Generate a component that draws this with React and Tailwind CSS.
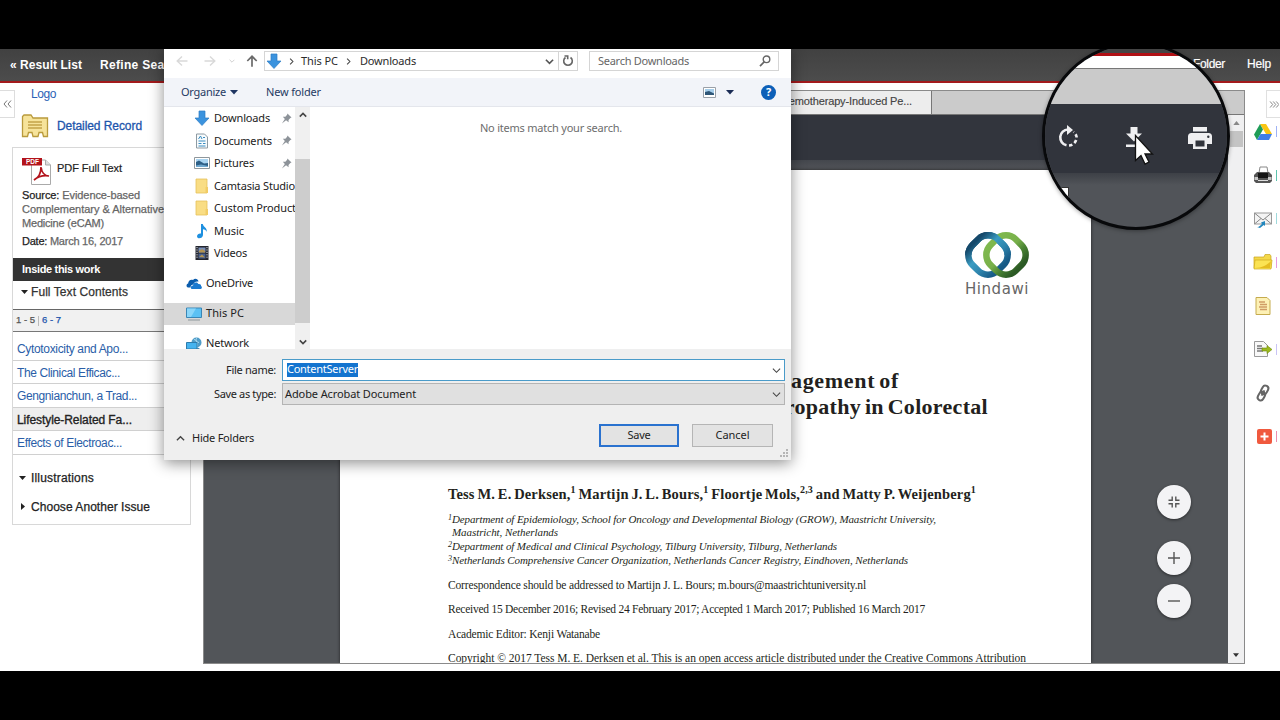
import { useLayoutEffect, useRef } from 'react';

// Single line of text, tracked so that it takes exactly w pixels
const Fit = ({ w, className = '', children }) => {
  const ref = useRef(null);

  useLayoutEffect(() => {
    const el = ref.current;
    el.style.letterSpacing = '0px';
    const natural = el.getBoundingClientRect().width;
    el.style.letterSpacing = `${(w - natural) / el.textContent.length}px`;
  }, [w]);

  return (
    <span ref={ref} className={`inline-block whitespace-nowrap ${className}`}>
      {children}
    </span>
  );
};

const Chevron = ({ d, className = '', size = 9, stroke = '#444', width = 1.5 }) => (
  <svg viewBox="0 0 10 10" width={size} height={size} className={`shrink-0 ${className}`}>
    <path d={d} fill="none" stroke={stroke} strokeWidth={width} />
  </svg>
);

const DOWN = 'M1 3l4 4 4-4';
const UP = 'M1 7l4-4 4 4';
const RIGHT = 'M3 1l4 4-4 4';

/* ---------- Icons of the file tree ---------- */

const DownloadIcon = () => (
  <svg viewBox="0 0 16 16" width="16" height="16" className="shrink-0">
    <path d="M5 1h6v7h4l-7 7.500L1 8h4z" fill="#3b93de" stroke="#2b7cc4" strokeWidth=".7" />
  </svg>
);

const DocumentIcon = () => (
  <svg viewBox="0 0 16 16" width="16" height="16" className="shrink-0">
    <path d="M2.500 1h8l3 3v11h-11z" fill="#f7fbfd" stroke="#8d9aa2" />
    <path d="M4.500 6l2-3 1.500 3M9 4.500h2M4.500 8h7M4.500 10.500h3M9 10.500h2.500M4.500 13h7" stroke="#3a8cc0" fill="none" />
  </svg>
);

const PictureIcon = () => (
  <svg viewBox="0 0 16 16" width="16" height="16" className="shrink-0">
    <path d="M.5 2.500h15v11H.5z" fill="#fff" stroke="#8f979c" />
    <path d="M2 4h12v8H2z" fill="#a9d4f1" />
    <path d="M2 7l3-1.500 5 3 4-.5v4H2z" fill="#2d5f86" />
    <path d="M2 10.500l5-1 7 1.500v1H2z" fill="#6fa8cf" />
  </svg>
);

const FolderIcon = () => (
  <svg viewBox="0 0 16 16" width="16" height="16" className="shrink-0">
    <path d="M2 1h11v14H2z" fill="#f9dd84" stroke="#e6c25c" strokeWidth=".8" />
    <path d="M11.500 9H14v6h-2.500z" fill="#f1cc66" />
  </svg>
);

const MusicIcon = () => (
  <svg viewBox="0 0 16 16" width="16" height="16" className="shrink-0">
    <path d="M7 1h1.800c.5 3 4.500 3.500 4 8-.6-2-2.200-2.600-3.800-2.800V12c0 2-1.900 3.300-3.900 3.300S2.300 13 4 11.300c.9-.8 2-.9 3-.7z" fill="#1e90e0" />
  </svg>
);

const VideoIcon = () => (
  <svg viewBox="0 0 16 16" width="16" height="16" className="shrink-0">
    <path d="M1.500 1h13v14h-13z" fill="#23252e" />
    <path d="M4.500 2.500h7v5h-7z" fill="#7b90b8" />
    <path d="M4.500 8.500h7v5h-7z" fill="#48618f" />
    <path d="M5 6l3-2 3 2v1.500H5zM5 12l3-2.500 3 3z" fill="#b29350" />
    <path d="M3 2v12M13 2v12" stroke="#dfe3ea" strokeDasharray="1.200 1.200" />
  </svg>
);

const OneDriveIcon = () => (
  <svg viewBox="0 0 16 12" width="16" height="12" className="shrink-0">
    <path d="M2 9.500C0 9 0 6 2.200 5.500 2 3 4.500 1 7 2c2-2.200 5-1 5.500 1.500-3-.5-5 1-5 3-1.700 0-3 1-3 3z" fill="#0a5cad" />
    <path d="M5.500 11c-1.300-1-.8-3.700 1.600-3.600C7 4.500 11 3.500 12.300 6c2-.4 3 .8 2.700 1.900 1.200.6 1.200 2.600-.3 3.100z" fill="#1a79cf" />
  </svg>
);

const PcIcon = () => (
  <svg viewBox="0 0 16 14" width="16" height="14" className="shrink-0">
    <path d="M.5 1h15v9.500H.5z" fill="#5cc1f3" stroke="#3a86b5" />
    <path d="M1 1.500h9l-5 8.500H1z" fill="#8bd6f9" />
    <path d="M2 13h12" stroke="#8e979c" />
  </svg>
);

const NetworkIcon = () => (
  <svg viewBox="0 0 16 14" width="16" height="14" className="shrink-0">
    <circle cx="10.500" cy="5.500" r="5" fill="#4f9cc8" />
    <path d="M8 2.500c3 0 2 3 5 3M11 .8c-3 3 2 5 0 9" stroke="#a7d8ef" fill="none" />
    <path d="M.5 5.500h10.500V12H.5z" fill="#45b3ef" stroke="#2d7cad" />
    <path d="M9 13l3-2 2 1.500" stroke="#2d7cad" fill="none" />
  </svg>
);

const PinIcon = () => (
  <svg viewBox="0 0 12 12" width="11" height="11" className="shrink-0">
    <path d="M7 .5L11.500 5l-1.300.5-2 2 .1 2.500L5.500 7.800 1 11.500l3.200-4.900L2 4l2.800.1L6.700 2z" fill="#8d9399" />
  </svg>
);

const quickAccess = [
  { label: 'Downloads', w: 56, Icon: DownloadIcon, pinned: true },
  { label: 'Documents', w: 58, Icon: DocumentIcon, pinned: true },
  { label: 'Pictures', w: 40, Icon: PictureIcon, pinned: true },
  { label: 'Camtasia Studio', w: 81, Icon: FolderIcon },
  { label: 'Custom Product', w: 82, Icon: FolderIcon },
  { label: 'Music', w: 30, Icon: MusicIcon },
  { label: 'Videos', w: 33, Icon: VideoIcon },
];

const roots = [
  { label: 'OneDrive', w: 47, Icon: OneDriveIcon },
  { label: 'This PC', w: 38, Icon: PcIcon, active: true },
  { label: 'Network', w: 43, Icon: NetworkIcon },
];

/* ---------- Save dialog ---------- */

const NavRow = () => (
  <div className="flex h-[29px] shrink-0 items-start pt-[2px] text-[#2b2b2b]">
    <div className="flex h-5 w-[100px] shrink-0 items-center pl-[12px]">
      <svg viewBox="0 0 12 12" width="12" height="12">
        <path d="M6 1.500L1.200 6 6 10.500M1.200 6H11.500" fill="none" stroke="#d9d9d9" strokeWidth="1.400" />
      </svg>
      <svg viewBox="0 0 12 12" width="12" height="12" className="ml-4">
        <path d="M6 1.500L10.800 6 6 10.500M10.800 6H.5" fill="none" stroke="#d9d9d9" strokeWidth="1.400" />
      </svg>
      <Chevron d={DOWN} size={6} stroke="#ccc" className="ml-[13px]" />
      <svg viewBox="0 0 12 12" width="12" height="12" className="ml-[11px]">
        <path d="M1.300 6L6 1.300 10.700 6M6 1.300V11.800" fill="none" stroke="#6a6a6a" strokeWidth="1.700" />
      </svg>
    </div>
    <div className="flex h-5 w-[314px] shrink-0 items-center border border-[#d5d5d5] bg-white">
      <div className="ml-[1px] flex"><DownloadIcon /></div>
      <Chevron d={RIGHT} size={7} className="mr-[6px] ml-[6px]" />
      <Fit w={37}>This PC</Fit>
      <Chevron d={RIGHT} size={7} className="mr-[8px] ml-[7px]" />
      <Fit w={56}>Downloads</Fit>
      <Chevron d={DOWN} size={9} className="mr-[4px] ml-auto" stroke="#555" width={1.8} />
      <div className="flex h-full w-[19px] items-center justify-center border-l border-[#d5d5d5]">
        <svg viewBox="0 0 12 12" width="12" height="12">
          <path d="M8.500 2.500a4.300 4.300 0 1 1-5 0M2.500 1h3.200v3.300" fill="none" stroke="#666" strokeWidth="1.600" />
        </svg>
      </div>
    </div>
    <div className="ml-[11px] flex h-5 w-[190px] items-center justify-between border border-[#d5d5d5] bg-white pr-[7px] pl-[8px] text-[#666]">
      <Fit w={91}>Search Downloads</Fit>
      <svg viewBox="0 0 12 12" width="12" height="12">
        <circle cx="7.500" cy="4.300" r="3.300" fill="none" stroke="#666" strokeWidth="1.400" />
        <path d="M5.200 6.800L1 11.200" stroke="#666" strokeWidth="1.700" />
      </svg>
    </div>
  </div>
);

const ToolRow = () => (
  <div className="flex h-[29px] shrink-0 items-center border-b border-[#e4e6ec] bg-[#f2f4f9] pr-[15px] pl-[17px] text-[#263a63]">
    <Fit w={45}>Organize</Fit>
    <svg viewBox="0 0 8 5" width="8" height="5" className="ml-[4px]">
      <path d="M0 0h8L4 4.500z" fill="#1f3562" />
    </svg>
    <Fit w={55} className="ml-[28px]">New folder</Fit>
    <svg viewBox="0 0 13 11" width="13" height="11" className="ml-auto">
      <path d="M.5.5h12v10H.5z" fill="#fff" stroke="#9aa0a8" />
      <path d="M2 2h9v6H2z" fill="#a5cdea" />
      <path d="M2 5l4-1 5 2.500V8H2z" fill="#2f5677" />
    </svg>
    <svg viewBox="0 0 8 5" width="8" height="5" className="ml-[10px]">
      <path d="M0 0h8L4 4.500z" fill="#1a2c55" />
    </svg>
    <div className="ml-[27px] flex size-[15px] items-center justify-center rounded-full bg-[#0c5fb8] text-[11px] font-bold text-white">?</div>
  </div>
);

const Tree = () => (
  <div className="h-full w-[131px] shrink-0 overflow-hidden text-[#222]">
    {quickAccess.map(({ label, w, Icon, pinned }) => (
      <div key={label} className="flex h-[22.500px] items-center pl-[30px]">
        <Icon />
        <Fit w={w} className="ml-[4px]">{label}</Fit>
        {pinned && <div className="mr-[3px] ml-auto"><PinIcon /></div>}
      </div>
    ))}
    {roots.map(({ label, w, Icon, active }, i) => (
      <div
        key={label}
        className={`flex h-[22.500px] items-center pl-[22px] ${i ? 'mt-[7.500px]' : 'mt-[8px]'} ${active ? 'bg-[#d8d8d8]' : ''}`}
      >
        <Icon />
        <Fit w={w} className="mb-[2px] ml-[4px] leading-[12px]">{label}</Fit>
      </div>
    ))}
  </div>
);

const SaveDialog = () => (
  <div className="absolute top-0 left-[164px] flex h-[411px] w-[627px] flex-col bg-white font-['Noto_Sans','Open_Sans',sans-serif] text-[11px] shadow-[0_3px_14px_rgba(0,0,0,0.45)]">
    <NavRow />
    <ToolRow />
    <div className="flex h-[242px] shrink-0">
      <Tree />
      <div className="flex h-full w-[15px] shrink-0 flex-col items-center bg-[#f0f0f0]">
        <Chevron d={UP} size={8} className="mt-[4px]" width={2} />
        <div className="mt-[40px] h-[164px] w-full bg-[#cdcdcd]" />
        <Chevron d={DOWN} size={8} className="mt-[15px]" width={2} />
      </div>
      <div className="flex-1 pt-[13px] pl-px text-center text-[#6d6d6d]">
        <Fit w={142}>No items match your search.</Fit>
      </div>
    </div>
    <div className="flex-1 bg-[#efefef] pt-[10px] text-[#222]">
      <div className="flex h-[22px] items-center">
        <div className="w-[112px] text-right"><Fit w={50}>File name:</Fit></div>
        <div className="ml-[6px] flex h-[22px] w-[503px] items-center justify-between border border-[#4a9bc9] bg-white pr-[3px] pl-[4px]">
          <span className="mb-[1px] flex h-[14px] items-center bg-[#1474cf] text-white"><Fit w={71}>ContentServer</Fit></span>
          <Chevron d={DOWN} size={9} width={1.2} />
        </div>
      </div>
      <div className="mt-[2px] flex h-[22px] items-center">
        <div className="w-[112px] text-right"><Fit w={62}>Save as type:</Fit></div>
        <div className="ml-[6px] flex h-[22px] w-[503px] items-center justify-between border border-[#b4b4b4] bg-[#e0e0e0] pr-[3px] pl-[2px]">
          <Fit w={131}>Adobe Acrobat Document</Fit>
          <Chevron d={DOWN} size={9} width={1.2} />
        </div>
      </div>
      <div className="mt-[19px] flex h-[23px] items-center">
        <Chevron d={UP} size={9} className="mt-[5px] ml-[12px]" />
        <Fit w={62} className="mt-[6px] ml-[7px]">Hide Folders</Fit>
        <div className="ml-auto flex h-[23px] w-[80px] items-center justify-center border-2 border-[#2a72cf] bg-[#e3e3e3]"><Fit w={23}>Save</Fit></div>
        <div className="mr-[18px] ml-[13px] flex h-[23px] w-[81px] items-center justify-center border border-[#b5b5b5] bg-[#e3e3e3]"><Fit w={34}>Cancel</Fit></div>
      </div>
      <svg viewBox="0 0 8 8" width="8" height="8" className="mt-[2px] mr-[3px] ml-auto">
        <path d="M6 0h2v2H6zM3 3h2v2H3zM6 3h2v2H6zM0 6h2v2H0zM3 6h2v2H3zM6 6h2v2H6z" fill="#b5b5b5" />
      </svg>
    </div>
  </div>
);

/* ---------- Left column ---------- */

const contents = [
  { label: 'Cytotoxicity and Apo...', w: 111 },
  { label: 'The Clinical Efficac...', w: 103 },
  { label: 'Gengnianchun, a Trad...', w: 120 },
  { label: 'Lifestyle-Related Fa...', w: 115, active: true },
  { label: 'Effects of Electroac...', w: 105 },
];

const LeftColumn = () => (
  <div className="w-[203px] shrink-0">
    <div className="flex h-[64px]">
      <div className="mt-[7px] flex h-[28px] w-[15px] items-center justify-center border border-l-0 border-[#ddd]">
        <svg viewBox="0 0 9 8" width="9" height="8">
          <path d="M4 .5L1 4l3 3.500M8 .5L5 4l3 3.500" fill="none" stroke="#777" />
        </svg>
      </div>
      <div className="pl-[6px]">
        <div className="h-[22px] pl-[10px] text-[12px] leading-[22px] text-[#2c62b5]"><Fit w={25}>Logo</Fit></div>
        <div className="mt-[9px] flex h-[24px] items-center text-[12px] text-[#1d55ac]">
          <svg viewBox="0 0 28 24" width="28" height="24">
            <path d="M1.500 22.500v-20L3 1h7l2 3h14.500v18.500h-4l-1-4h-3.500l-1 4h-5l-1-4H7.500l-1 4z" fill="#f6e39a" stroke="#b99a3c" strokeWidth="1.300" />
            <path d="M7 8h14M7 11h14M7 14h14" stroke="#c3a44a" strokeWidth="1.300" />
          </svg>
          <Fit w={85} className="ml-[8px] [-webkit-text-stroke:0.3px]">Detailed Record</Fit>
        </div>
      </div>
    </div>

    <div className="ml-[12px] h-[378px] w-[179px] border border-[#d8d8d8] text-[11px]">
      <div className="mt-[8px] flex h-[29px] items-center pl-[9px]">
        <svg viewBox="0 0 29 28" width="29" height="28">
          <path d="M9.500 3h14l5 5v19.500h-19z" fill="#fff" stroke="#aaa" />
          <path d="M23.500 3v5h5" fill="#ddd" stroke="#aaa" />
          <path d="M12 23c4-2 7-7 7-13 1 7 4 9 8 9-6-1-10 0-15 4z" fill="none" stroke="#b3131b" strokeWidth="1.700" />
          <path d="M0 1h20v7.500H0z" fill="#b3131b" />
          <text x="4" y="7.300" fontSize="6.500" fontWeight="bold" fontFamily="Liberation Sans" fill="#fff">PDF</text>
        </svg>
        <Fit w={65} className="mb-[4px] ml-[6px] text-[#222] [-webkit-text-stroke:0.2px]">PDF Full Text</Fit>
      </div>
      <div className="mt-[3px] pl-[9px] leading-[14px] text-[#666] [-webkit-text-stroke:0.25px]">
        <div><Fit w={118}><span className="text-[#222]">Source:</span> Evidence-based</Fit></div>
        <div><Fit w={142}>Complementary & Alternative</Fit></div>
        <div><Fit w={82}>Medicine (eCAM)</Fit></div>
        <div className="mt-[4px]"><Fit w={101}><span className="text-[#222]">Date:</span> March 16, 2017</Fit></div>
      </div>
      <div className="mt-[10px] h-[23px] bg-[#333] pl-[9px] font-bold leading-[22px] text-white"><Fit w={78}>Inside this work</Fit></div>
      <div className="flex h-[29px] items-center border-b border-[#666] pb-[6px] pl-[8px] text-[12px] text-[#333]">
        <svg viewBox="0 0 7 4" width="7" height="4"><path d="M0 0h7L3.500 4z" fill="#222" /></svg>
        <Fit w={97} className="ml-[3px] [-webkit-text-stroke:0.25px]">Full Text Contents</Fit>
      </div>
      <div className="flex h-[22px] items-center border-b border-[#777] bg-[#f1f1f1] pl-[3px] text-[9.500px] text-[#555] [-webkit-text-stroke:0.25px]">
        <Fit w={19}>1 - 5</Fit>
        <span className="mx-[3px] h-[10px] w-px bg-[#bbb]" />
        <Fit w={19} className="text-[#1d55ac]">6 - 7</Fit>
      </div>
      <div className="pt-[5px] text-[12px]">
        {contents.map(({ label, w, active }) => (
          <div
            key={label}
            className={`h-[23.500px] border-b border-[#d0d0d0] pl-[4px] leading-[24px] ${active ? 'bg-[#eee] text-[#222] [-webkit-text-stroke:0.35px]' : 'text-[#2a5ea8]'}`}
          >
            <Fit w={w}>{label}</Fit>
          </div>
        ))}
      </div>
      <div className="mt-[9px] flex h-[28px] items-center pl-[6px] text-[12px] text-[#222] [-webkit-text-stroke:0.25px]">
        <svg viewBox="0 0 7 4" width="7" height="4"><path d="M0 0h7L3.500 4z" fill="#222" /></svg>
        <Fit w={63} className="ml-[5px]">Illustrations</Fit>
      </div>
      <div className="flex h-[30px] items-center pl-[8px] text-[12px] text-[#222] [-webkit-text-stroke:0.25px]">
        <svg viewBox="0 0 4 7" width="4" height="7"><path d="M0 0v7l4-3.500z" fill="#222" /></svg>
        <Fit w={119} className="ml-[6px]">Choose Another Issue</Fit>
      </div>
    </div>
  </div>
);

/* ---------- PDF viewer ---------- */

const HindawiLogo = () => (
  <div className="flex w-[63px] flex-col">
    <svg viewBox="0 0 64 46" width="64" height="46">
      <defs>
        <linearGradient id="blue" x1="0" y1=".5" x2="1" y2=".5">
          <stop offset="0" stopColor="#15496b" />
          <stop offset=".35" stopColor="#3a9cc2" />
          <stop offset=".65" stopColor="#2f86ae" />
          <stop offset="1" stopColor="#175a86" />
        </linearGradient>
        <linearGradient id="green" x1="0" y1=".5" x2="1" y2=".5">
          <stop offset="0" stopColor="#7fb84e" />
          <stop offset=".45" stopColor="#78b04a" />
          <stop offset=".7" stopColor="#4a8434" />
          <stop offset="1" stopColor="#2c5a25" />
        </linearGradient>
        <clipPath id="upper"><path d="M0 0h64v23H0z" /></clipPath>
      </defs>
      <rect x="5" y="5" width="36" height="36" rx="14" transform="rotate(45 23 23)" fill="none" stroke="url(#blue)" strokeWidth="6.500" />
      <rect x="23" y="5" width="36" height="36" rx="14" transform="rotate(45 41 23)" fill="none" stroke="url(#green)" strokeWidth="6.500" />
      <g clipPath="url(#upper)">
        <rect x="5" y="5" width="36" height="36" rx="14" transform="rotate(45 23 23)" fill="none" stroke="url(#blue)" strokeWidth="6.500" />
      </g>
    </svg>
    <div className="mt-[2px] font-['DejaVu_Sans',sans-serif] text-[15px] leading-[19px] text-[#666]"><Fit w={64}>Hindawi</Fit></div>
  </div>
);

const PdfPage = () => (
  <div className="ml-[136px] h-[493px] w-[751px] overflow-hidden bg-white pt-[62px] pl-[108px] font-['Liberation_Serif',serif] text-[11.500px] text-[#231f20] shadow-[0_0_3px_#222]">
    <div className="ml-[517px] h-[64px]"><HindawiLogo /></div>
    <div className="mt-[72px] text-[22px] font-bold leading-[25.500px] [word-spacing:-2px]">
      <div className="w-[451px] text-right"><Fit w={154}>Management of</Fit></div>
      <div className="w-[540px] text-right"><Fit w={242}>Neuropathy in Colorectal</Fit></div>
    </div>
    <div className="mt-[65px] h-[20px] text-[14.500px] font-bold leading-[20px] [word-spacing:-1px] [&_sup]:top-[-6px] [&_sup]:text-[10px]">
      <Fit w={528}>
        Tess M. E. Derksen,<sup>1</sup> Martijn J. L. Bours,<sup>1</sup> Floortje Mols,<sup>2,3</sup> and Matty P. Weijenberg<sup>1</sup>
      </Fit>
    </div>
    <div className="mt-[8px] text-[11px] italic [&>div]:h-[13.700px] [&>div]:leading-[14px] [&_sup]:top-[-3px] [&_sup]:text-[8px]">
      <div><Fit w={488}><sup>1</sup>Department of Epidemiology, School for Oncology and Developmental Biology (GROW), Maastricht University,</Fit></div>
      <div className="pl-[4px]"><Fit w={106} className="-mt-px align-top">Maastricht, Netherlands</Fit></div>
      <div><Fit w={389}><sup>2</sup>Department of Medical and Clinical Psychology, Tilburg University, Tilburg, Netherlands</Fit></div>
      <div><Fit w={460}><sup>3</sup>Netherlands Comprehensive Cancer Organization, Netherlands Cancer Registry, Eindhoven, Netherlands</Fit></div>
    </div>
    <div className="mt-[10px] [&>div]:h-[24.400px] [&>div]:leading-[16px]">
      <div><Fit w={418}>Correspondence should be addressed to Martijn J. L. Bours; m.bours@maastrichtuniversity.nl</Fit></div>
      <div><Fit w={477}>Received 15 December 2016; Revised 24 February 2017; Accepted 1 March 2017; Published 16 March 2017</Fit></div>
      <div><Fit w={152}>Academic Editor: Kenji Watanabe</Fit></div>
      <div><Fit w={578}>Copyright © 2017 Tess M. E. Derksen et al. This is an open access article distributed under the Creative Commons Attribution</Fit></div>
    </div>
  </div>
);

const RoundButton = ({ d, className = '' }) => (
  <div className={`flex size-[34px] items-center justify-center rounded-full bg-[#f3f3f5] shadow-[0_1px_3px_rgba(0,0,0,0.5)] ${className}`}>
    <svg viewBox="0 0 12 12" width="12" height="12">
      <path d={d} fill="none" stroke="#555" strokeWidth="1.400" />
    </svg>
  </div>
);

const Viewer = () => (
  <div className="mt-[7px] flex h-[574px] w-[1042px] shrink-0 flex-col border border-[#8a8a8a]">
    <div className="flex h-[24px] shrink-0 bg-[#cbcbcb]">
      <div className="w-[728px] border-r border-b border-[#777] bg-[#ededed] pr-[19px] text-right text-[11px] leading-[20px] text-[#444] [-webkit-text-stroke:0.15px]">
        <Fit w={137}>Chemotherapy-Induced Pe...</Fit>
      </div>
      <div className="flex-1 border-b border-[#777]" />
    </div>
    <div className="flex min-h-0 flex-1">
      <div className="relative w-[1024px] overflow-hidden bg-[#525559]">
        <div className="h-[45px] bg-[#32353d]" />
        <div className="h-[10px] bg-linear-to-b from-[#44474d] to-[#525459]" />
        <PdfPage />
        <div className="absolute top-[370px] left-[953px] flex flex-col">
          <RoundButton d="M4.200 .5v3.700H.5M7.800 .5v3.700h3.700M4.200 11.500V7.800H.5M7.800 11.500V7.800h3.700" />
          <RoundButton d="M6 0v12M0 6h12" className="mt-[22px]" />
          <RoundButton d="M0 6h12" className="mt-[9px]" />
        </div>
      </div>
      <div className="flex flex-1 flex-col items-center bg-[#f0f0f1]">
        <svg viewBox="0 0 8 5" width="7" height="4" className="mt-[6px]"><path d="M0 5h8L4 0z" fill="#888" /></svg>
        <div className="mt-[6px] h-[16px] w-[13px] bg-[#c4c4c4]" />
        <svg viewBox="0 0 8 5" width="6" height="4" className="mt-auto mb-[6px]"><path d="M0 0h8L4 5z" fill="#333" /></svg>
      </div>
    </div>
  </div>
);

/* ---------- Right tool rail ---------- */

const tools = [
  {
    sliver: 'bg-[#9fb2f5]',
    art: (
      <>
        <path d="M7 2h6l6 10h-6z" fill="#f9c513" />
        <path d="M7 2l3 5.500L4 18l-3-5.500z" fill="#1f9d58" />
        <path d="M7.500 12H19l-3 6H4z" fill="#3f7ee8" />
      </>
    ),
  },
  {
    sliver: 'bg-[#5cc4ae]',
    art: (
      <>
        <path d="M6 8l1-6h7l1 6z" fill="#fff" stroke="#888" />
        <path d="M1 10l3-3h12l3 3v6l-2 2H3l-2-2z" fill="#555" />
        <path d="M5 8h10v5H5z" fill="#161616" />
        <path d="M1.500 12H5v3H1.500zM15 12h3.500v3H15z" fill="#c8c8c8" />
        <path d="M5 15.500h10" stroke="#ddd" />
      </>
    ),
  },
  {
    sliver: 'bg-[#9fd9dc]',
    art: (
      <>
        <path d="M1.500 4h17v11h-17z" fill="#f4f4f4" stroke="#999" />
        <path d="M1.500 4l8.500 7 8.500-7M1.500 15L8 9.500M18.500 15L12 9.500" fill="none" stroke="#888" />
        <path d="M4 18c3 0 3-2 5-3l-1-1.500 4-1.500v5l-1.300-1L7 19z" fill="#2287bd" />
      </>
    ),
  },
  {
    sliver: 'bg-[#e79be0]',
    art: (
      <>
        <path d="M1 5h10l1-2.500h5L18 4v12H1z" fill="#f4d84a" stroke="#c9a51e" strokeWidth=".7" />
        <path d="M1 17l1-9h17l-1 9z" fill="#fbe353" stroke="#cfa91c" strokeWidth=".7" />
        <path d="M2 16c7 0 12-3 16-7l-1 7z" fill="#e5bc20" />
      </>
    ),
  },
  {
    sliver: 'bg-[#fff]',
    art: (
      <>
        <path d="M3 1.500h11l3 3v14H3z" fill="#fdf1b5" stroke="#c5ab4e" />
        <path d="M6 6h6M7 8.500h7M6 11h8M7 13.500h7" stroke="#cf9c66" strokeWidth="1.400" />
      </>
    ),
  },
  {
    sliver: 'bg-[#c9c3f5]',
    art: (
      <>
        <path d="M1.500 2.500h9l4 4v11h-13z" fill="#f8f8f8" stroke="#999" />
        <path d="M4 7h5M4 9.500h6M4 12h6" stroke="#777" strokeWidth="1.300" />
        <path d="M9 9h5V6.500l5 4-5 4V12H9z" fill="#9cb91e" stroke="#71890f" strokeWidth=".6" />
      </>
    ),
  },
  {
    sliver: 'bg-[#fff]',
    art: (
      <g transform="rotate(28 10 10)" fill="none" stroke="#666" strokeWidth="2">
        <rect x="7" y="2" width="6" height="9" rx="3" />
        <rect x="7" y="9" width="6" height="9" rx="3" />
        <path d="M10 7v6" />
      </g>
    ),
  },
  {
    sliver: 'bg-[#ec8fae]',
    art: (
      <>
        <rect x="4" y="3" width="15" height="15" rx="2" fill="#f0593e" />
        <path d="M11.500 6.500v8M7.500 10.500h8" stroke="#fff" strokeWidth="2" />
      </>
    ),
  },
];

const RightRail = () => (
  <div className="flex-1 overflow-hidden">
    <div className="mt-[7px] ml-[21px] flex h-[28px] items-center justify-center border border-r-0 border-[#e0e0e0]">
      <svg viewBox="0 0 11 8" width="10" height="7">
        <path d="M1 .5L4 4 1 7.500M4.500 .5l3 3.500-3 3.500M8 .5L11 4 8 7.500" fill="none" stroke="#777" />
      </svg>
    </div>
    <div className="-mt-[8px]">
      {tools.map(({ sliver, art }, i) => (
        <div key={i} className="flex h-[43.500px] items-center pl-[8px]">
          <svg viewBox="0 0 20 20" width="20" height="20" className="shrink-0">{art}</svg>
          <span className={`ml-[3px] h-[11px] w-px ${sliver}`} />
        </div>
      ))}
    </div>
  </div>
);

/* ---------- Magnifier over the viewer toolbar ---------- */

const Magnifier = () => (
  <div className="absolute top-[-7px] left-[1042px] size-[188px] overflow-hidden rounded-full border-[3px] border-[#08090b] bg-[#515459] shadow-[0_1px_4px_rgba(0,0,0,0.35)]">
    <div className="h-[8px] bg-[#444]" />
    <div className="h-[3px] bg-[#b01015]" />
    <div className="h-[12px] bg-white" />
    <div className="h-[36px] border-t border-[#777] bg-[#cacaca]" />
    <div className="flex h-[69px] items-center bg-[#31343c] text-[#efeff1]">
      <svg viewBox="0 0 24 24" width="24" height="24" className="mb-[4px] ml-[11px]">
        <path d="M12 4.500a8 8 0 0 0-1.500 15.800" fill="none" stroke="currentColor" strokeWidth="2.600" />
        <path d="M11 0l6 5-6 5z" fill="currentColor" />
        <path d="M13 20.500a8 8 0 0 0 7.500-9 8 8 0 0 0-3-4.500" fill="none" stroke="currentColor" strokeWidth="2.600" strokeDasharray="3.500 2.500" />
      </svg>
      <svg viewBox="0 0 20 24" width="20" height="24" className="mb-[3px] ml-[44px]">
        <path d="M6.500 2h7v6.500h4.500l-8 8-8-8h4.500zM2 19.500h16V22H2z" fill="currentColor" />
      </svg>
      <svg viewBox="0 0 24 22" width="24" height="22" className="mb-[2px] ml-[44px]">
        <path d="M5 0h14v4.500H5z" fill="currentColor" />
        <path d="M3.500 6h17A3.500 3.500 0 0 1 24 9.500V17h-5v5H5v-5H0V9.500A3.500 3.500 0 0 1 3.500 6z" fill="currentColor" />
        <path d="M7.500 13.500h9v6h-9z" fill="#31343c" />
        <circle cx="20.300" cy="9.700" r="1.200" fill="#31343c" />
      </svg>
    </div>
    <div className="h-[12px] bg-linear-to-b from-[#3d4046] to-[#515459]" />
    <div className="mt-[2px] h-[20px] w-[24px] border-t border-r border-[#333] bg-white" />
  </div>
);

const Cursor = () => (
  <svg viewBox="0 0 20 32" width="20" height="32" className="absolute top-[85px] left-[1134px]">
    <path d="M1.500 1.500v25l5.500-5 4 8.500 4-2-4-8h7.500z" fill="#fff" stroke="#111" strokeWidth="1.300" />
  </svg>
);

export default function App() {
  return (
    <div className="flex h-[720px] w-[1280px] flex-col overflow-hidden bg-black font-['Liberation_Sans',Arial,sans-serif]">
      <div className="relative mt-[49px] h-[622px] overflow-hidden bg-white">
        <div className="flex h-[34px] items-center border-b-2 border-[#a31a1c] bg-linear-to-b from-[#414141] to-[#4c4c4c] text-[12px] font-bold text-white">
          <Fit w={72} className="ml-[10px]">« Result List</Fit>
          <Fit w={84} className="ml-[18px]">Refine Search</Fit>
          <Fit w={32} className="mr-[22px] mb-[2px] ml-auto font-normal [-webkit-text-stroke:0.2px]">Folder</Fit>
          <Fit w={24} className="mr-[9px] mb-[2px] font-normal [-webkit-text-stroke:0.2px]">Help</Fit>
        </div>
        <div className="flex">
          <LeftColumn />
          <Viewer />
          <RightRail />
        </div>
        <SaveDialog />
        <Magnifier />
        <Cursor />
      </div>
    </div>
  );
}
